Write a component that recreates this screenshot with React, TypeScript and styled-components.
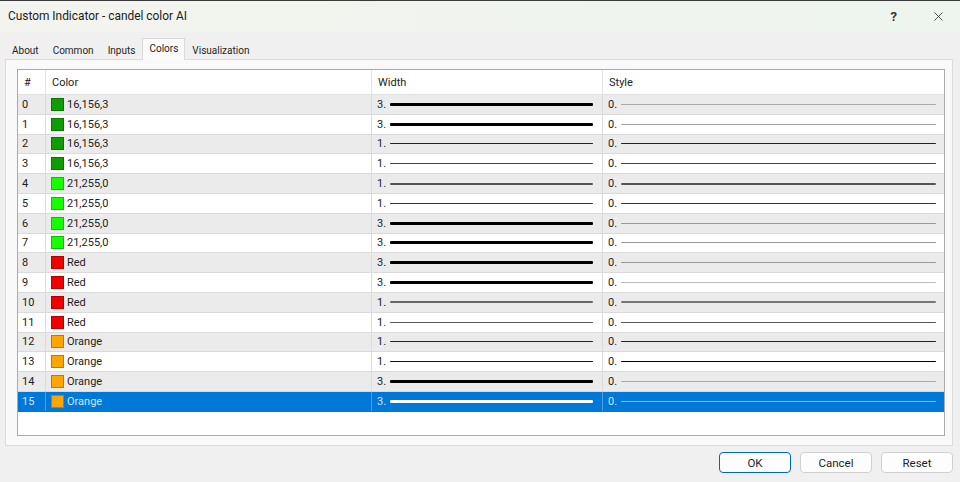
import React from "react";
import styled, { createGlobalStyle } from "styled-components";
import { X } from "lucide-react";

type Line = { color: string; size: number };

type Buffer = {
  color: string;
  label: string;
  width: number;
  widthLine: Line;
  styleLine: Line;
};

const green = "rgb(16,156,3)";
const lime = "rgb(21,255,0)";
const red = "rgb(240,0,0)";
const orange = "rgb(255,165,0)";

const thick: Line = { color: "#000", size: 3 };

const buffers: Buffer[] = [
  { color: green, label: "16,156,3", width: 3, widthLine: thick, styleLine: { color: "#aaa", size: 1 } },
  { color: green, label: "16,156,3", width: 3, widthLine: thick, styleLine: { color: "#a0a0a0", size: 1 } },
  { color: green, label: "16,156,3", width: 1, widthLine: { color: "#222", size: 1 }, styleLine: { color: "#222", size: 1 } },
  { color: green, label: "16,156,3", width: 1, widthLine: { color: "#444", size: 1 }, styleLine: { color: "#444", size: 1 } },
  { color: lime, label: "21,255,0", width: 1, widthLine: { color: "#555", size: 2 }, styleLine: { color: "#555", size: 2 } },
  { color: lime, label: "21,255,0", width: 1, widthLine: { color: "#333", size: 1 }, styleLine: { color: "#333", size: 1 } },
  { color: lime, label: "21,255,0", width: 3, widthLine: thick, styleLine: { color: "#999", size: 1 } },
  { color: lime, label: "21,255,0", width: 3, widthLine: thick, styleLine: { color: "#999", size: 1 } },
  { color: red, label: "Red", width: 3, widthLine: thick, styleLine: { color: "#999", size: 1 } },
  { color: red, label: "Red", width: 3, widthLine: thick, styleLine: { color: "#bbb", size: 1 } },
  { color: red, label: "Red", width: 1, widthLine: { color: "#666", size: 2 }, styleLine: { color: "#777", size: 2 } },
  { color: red, label: "Red", width: 1, widthLine: { color: "#555", size: 1 }, styleLine: { color: "#555", size: 1 } },
  { color: orange, label: "Orange", width: 1, widthLine: { color: "#222", size: 1 }, styleLine: { color: "#222", size: 1 } },
  { color: orange, label: "Orange", width: 1, widthLine: { color: "#111", size: 1 }, styleLine: { color: "#000", size: 1 } },
  { color: orange, label: "Orange", width: 3, widthLine: thick, styleLine: { color: "#aaa", size: 1 } },
  { color: orange, label: "Orange", width: 3, widthLine: { color: "#fff", size: 3 }, styleLine: { color: "#8ebbe8", size: 1 } },
];

const tabs = ["About", "Common", "Inputs", "Colors", "Visualization"];
const selectedRow = 15;

const App: React.FC = () => {
  return (
    <>
      <GlobalStyle />
      <Window>
        <TitleBar>
          <Title>Custom Indicator - candel color AI</Title>
          <TitleControls>
            <HelpMark>?</HelpMark>
            <CloseIcon>
              <X size={15} strokeWidth={1.2} />
            </CloseIcon>
          </TitleControls>
        </TitleBar>

        <Body>
          <TabStrip>
            {tabs.map((t) => (
              <Tab key={t} $active={t === "Colors"}>
                {t}
              </Tab>
            ))}
          </TabStrip>

          <Panel>
            <List>
              <HeaderRow>
                <HeadCell>#</HeadCell>
                <HeadCell $sep>Color</HeadCell>
                <HeadCell $sep>Width</HeadCell>
                <HeadCell $sep>Style</HeadCell>
              </HeaderRow>
              {buffers.map((b, i) => {
                const selected = i === selectedRow;
                return (
                  <Row key={i} $alt={i % 2 === 0} $selected={selected}>
                    <IndexCell>{i}</IndexCell>
                    <Cell $selected={selected}>
                      <Swatch style={{ background: b.color }} />
                      {b.label}
                    </Cell>
                    <Cell $selected={selected}>
                      <Value>{b.width}.</Value>
                      <Stroke
                        $end={9}
                        style={{ height: b.widthLine.size, background: b.widthLine.color }}
                      />
                    </Cell>
                    <Cell $selected={selected}>
                      <Value>0.</Value>
                      <Stroke
                        $end={8}
                        style={{ height: b.styleLine.size, background: b.styleLine.color }}
                      />
                    </Cell>
                  </Row>
                );
              })}
            </List>
          </Panel>

          <Footer>
            <DialogButton $primary>OK</DialogButton>
            <DialogButton>Cancel</DialogButton>
            <DialogButton>Reset</DialogButton>
          </Footer>
        </Body>
      </Window>
    </>
  );
};

const GlobalStyle = createGlobalStyle`
  html, body {
    margin: 0;
    padding: 0;
    background: #f0f0f0;
  }
  body {
    font-family: Roboto, "Liberation Sans", sans-serif;
    font-size: 11px;
    color: #1e1e1e;
  }
`;

const Window = styled.div`
  width: 960px;
  height: 482px;
  display: flex;
  flex-direction: column;
  background: #f0f0f0;
  border-top: 1px solid #3a3a3a;
  box-sizing: border-box;
  overflow: hidden;
`;

const TitleBar = styled.div`
  height: 31px;
  flex-shrink: 0;
  display: flex;
  align-items: center;
  justify-content: space-between;
  padding-left: 8px;
  background: linear-gradient(90deg, #f4f4ef, #eef4ee);
`;

const Title = styled.div`
  font-size: 11.9px;
  color: #1a1a1a;
  padding-bottom: 1px;
`;

const TitleControls = styled.div`
  display: flex;
  align-items: center;
  gap: 34px;
  padding-right: 14px;
`;

const HelpMark = styled.span`
  font-size: 13px;
  font-weight: 700;
  color: #333;
`;

const CloseIcon = styled.span`
  display: flex;
  color: #222;
`;

const Body = styled.div`
  flex: 1;
  display: flex;
  flex-direction: column;
  padding: 8px 7px 0 5px;
`;

const TabStrip = styled.div`
  display: flex;
  align-items: flex-end;
  height: 19px;
  position: relative;
  z-index: 1;
`;

const Tab = styled.div<{ $active?: boolean }>`
  padding: 0 6px;
  height: ${({ $active }) => ($active ? "21px" : "18px")};
  line-height: ${({ $active }) => ($active ? "20px" : "19px")};
  margin-bottom: ${({ $active }) => ($active ? "-1px" : "0")};
  background: ${({ $active }) => ($active ? "#fafafa" : "transparent")};
  border: 1px solid ${({ $active }) => ($active ? "#dadada" : "transparent")};
  border-bottom: none;
  color: #1e1e1e;
  font-size: 10px;
`;

const Panel = styled.div`
  height: 387px;
  box-sizing: border-box;
  border: 1px solid #dcdcdc;
  background: #f9f9f9;
  padding: 9px 7px 9px 11px;
  display: flex;
`;

const List = styled.div`
  flex: 1;
  border: 1px solid #a9a9a9;
  background: #fff;
  display: flex;
  flex-direction: column;
  overflow: hidden;
`;

const columns = "27px 326px 231px 1fr";

const HeaderRow = styled.div`
  display: grid;
  grid-template-columns: ${columns};
  height: 25px;
  flex-shrink: 0;
  border-bottom: 1px solid #e2e2e2;
  box-sizing: border-box;
`;

const HeadCell = styled.div<{ $sep?: boolean }>`
  display: flex;
  align-items: center;
  padding-left: 6px;
  border-left: ${({ $sep }) => ($sep ? "1px solid #e2e2e2" : "none")};
  color: #222;
`;

const Row = styled.div<{ $alt?: boolean; $selected?: boolean }>`
  display: grid;
  grid-template-columns: ${columns};
  height: 19.8px;
  flex-shrink: 0;
  box-sizing: border-box;
  border-bottom: 1px solid ${({ $selected }) => ($selected ? "#0078d7" : "#dadada")};
  background: ${({ $alt, $selected }) =>
    $selected ? "#0078d7" : $alt ? "#ebebeb" : "#fff"};
  color: ${({ $selected }) => ($selected ? "#d2e6fa" : "#222")};
`;

const IndexCell = styled.div`
  display: flex;
  align-items: center;
  padding-left: 4px;
`;

const Cell = styled.div<{ $selected?: boolean }>`
  display: flex;
  align-items: center;
  padding-left: 5px;
  border-left: 1px solid ${({ $selected }) => ($selected ? "#4f9be0" : "#dcdcdc")};
  min-width: 0;
`;

const Swatch = styled.span`
  width: 11px;
  height: 11px;
  border: 1px solid rgba(0, 0, 0, 0.25);
  margin-right: 3px;
  flex-shrink: 0;
`;

const Value = styled.span`
  width: 13px;
  flex-shrink: 0;
`;

const Stroke = styled.span<{ $end: number }>`
  flex: 1;
  margin-right: ${({ $end }) => $end}px;
  border-radius: 1px;
`;

const Footer = styled.div`
  display: flex;
  justify-content: flex-end;
  gap: 9px;
  margin-top: 6px;
`;

const DialogButton = styled.button<{ $primary?: boolean }>`
  width: 72px;
  height: 21px;
  box-sizing: border-box;
  border: 1px solid ${({ $primary }) => ($primary ? "#0067c0" : "#d0d0d0")};
  border-radius: 4px;
  background: #fdfdfd;
  font-family: Roboto, "Liberation Sans", sans-serif;
  font-size: 11.5px;
  color: #1e1e1e;
  padding: 0;
`;

export default App;
